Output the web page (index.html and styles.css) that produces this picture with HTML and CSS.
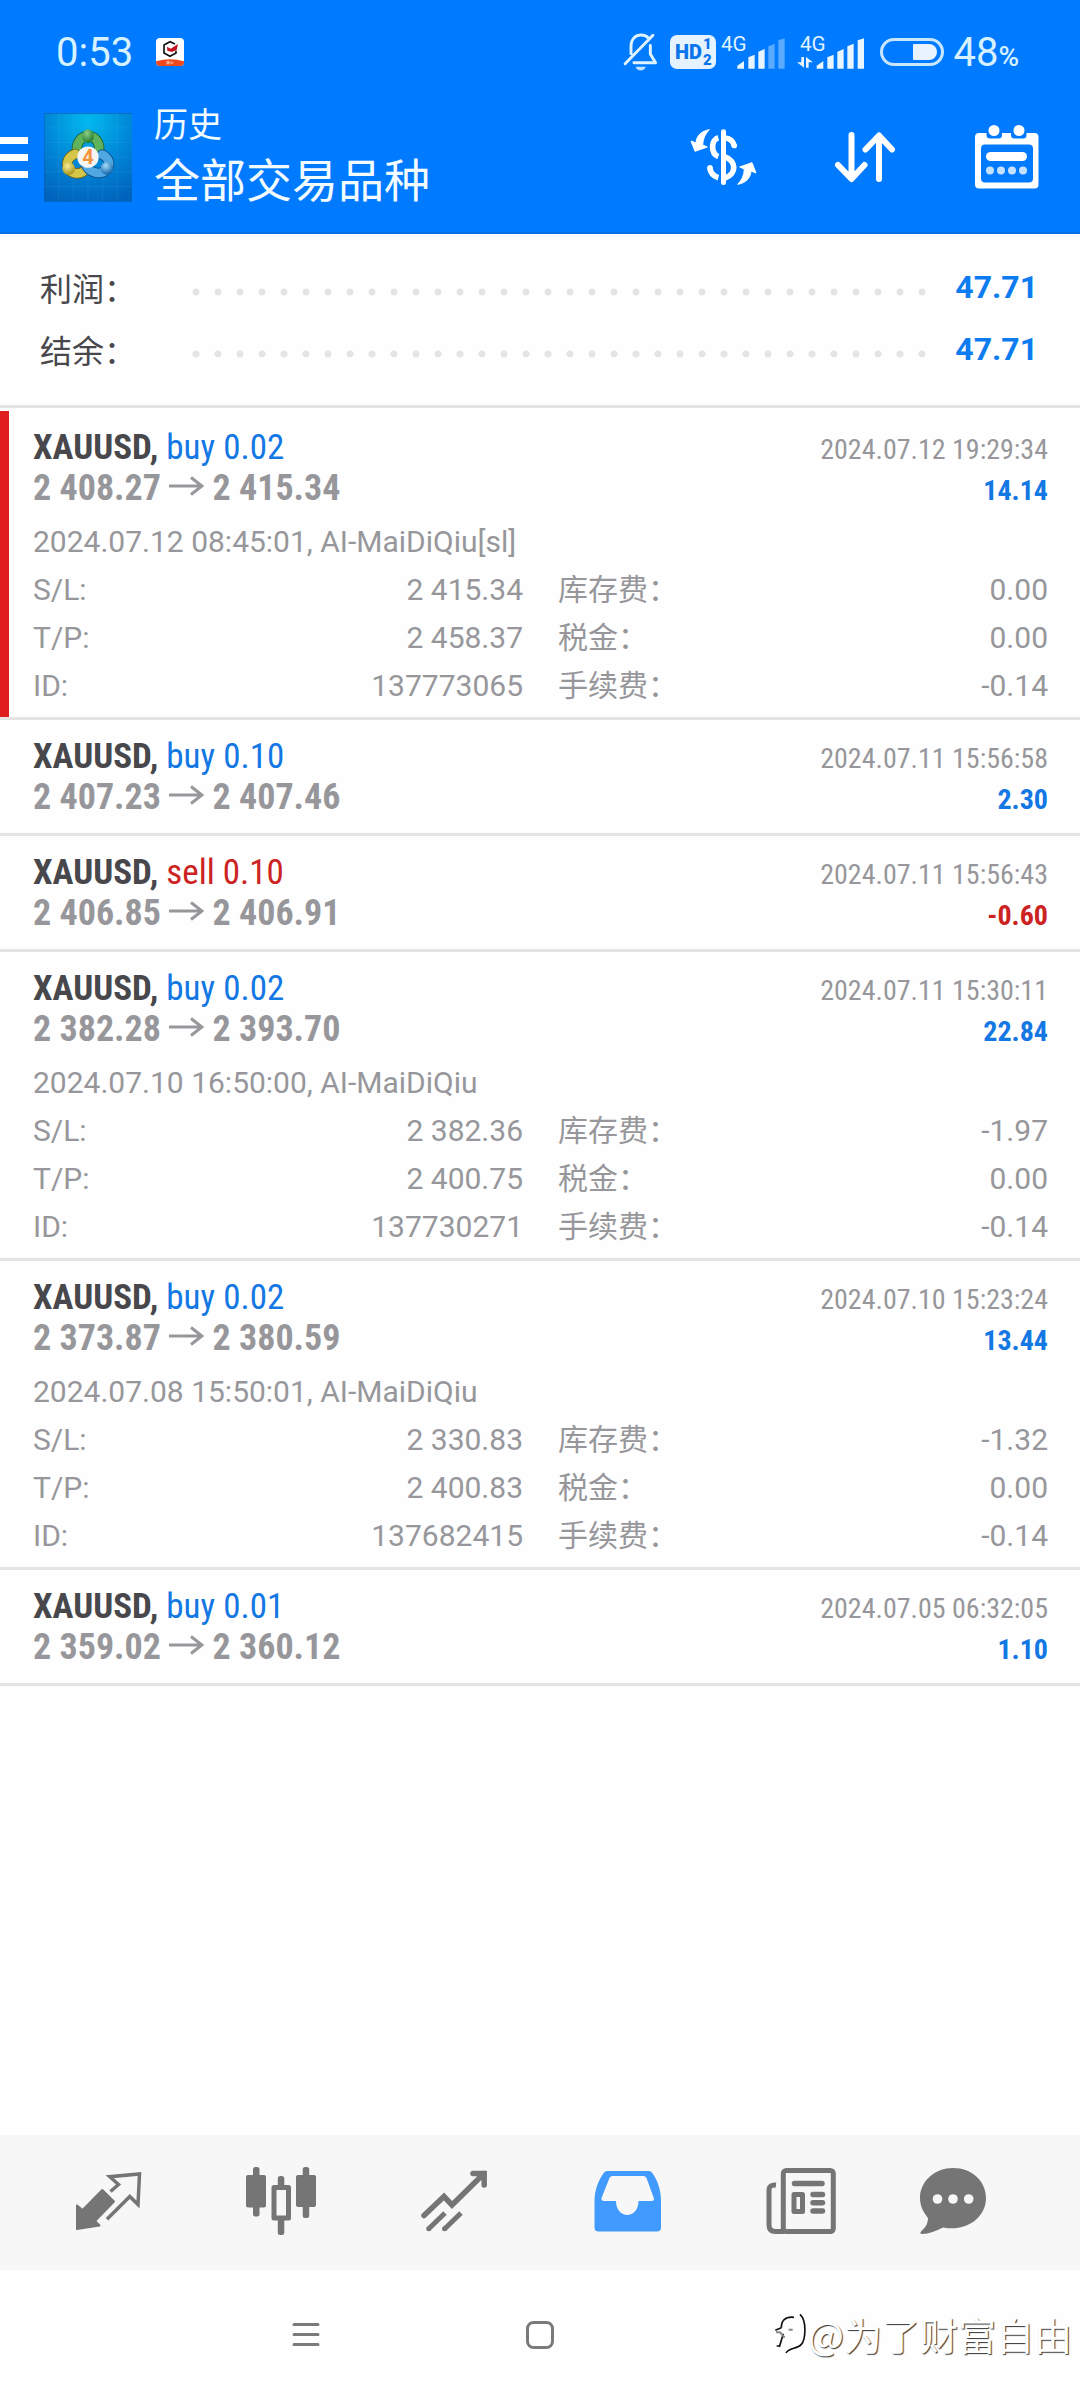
FILE: index.html
```html
<!DOCTYPE html>
<html lang="zh-CN">
<head>
<meta charset="utf-8">
<meta name="viewport" content="width=device-width, initial-scale=1">
<title>历史</title>
<link rel="stylesheet" href="styles.css">
</head>
<body>
<header class="header">
  <div class="status">
    <span class="clock">0:53</span>
    <svg class="notice" width="28" height="28" viewBox="0 0 84 84" aria-hidden="true">
      <defs><clipPath id="tile"><rect width="84" height="84" rx="12"/></clipPath></defs>
      <g clip-path="url(#tile)">
        <rect width="84" height="84" fill="#fff"/>
        <path d="M0 70Q42 58 84 70V84H0Z" fill="#f0481c"/>
        <path d="M57 18 42 11 24 21V45L42 55 60 45V38" fill="none" stroke="#111" stroke-width="5"/>
        <path d="M33 26 44 32 66 18 62 36 48 42 34 38Z" fill="#c41224"/>
        <text x="42" y="79" font-size="11" text-anchor="middle" fill="#fff" class="notice-text">骑士</text>
      </g>
    </svg>
    <div class="status-icons">
      <svg width="35" height="38" viewBox="35 40 106 116" aria-hidden="true">
        <g fill="none" stroke="#dff2ff" stroke-width="9" stroke-linecap="round" stroke-linejoin="round">
          <path d="M41 134 126 47M59 103V82C59 57 74 46 90 46 99 46 106 49 111 54M118 78V104L134 131H68"/>
        </g>
        <path d="M73 143H104C101 158 76 158 73 143Z" fill="#bfe2ff"/>
      </svg>
      <span class="hd"><b>HD</b><span class="hd-num"><b>1</b><b>2</b></span></span>
      <svg class="signal-one" width="64" height="44" viewBox="330 27 192 132" aria-label="4G">
        <text x="330" y="91" font-size="62" fill="#dff2ff" class="net">4G</text>
        <g fill="#e8f5ff"><path d="M379 134 399 120V143H379ZM412 109 431 101V143H412ZM442 92 461 84V143H442Z"/></g>
        <g fill="#5aabff"><path d="M472 76 491 68V143H472ZM502 58 521 52V143H502Z"/></g>
      </svg>
      <svg class="signal-two" width="67" height="44" viewBox="558 27 201 132" aria-label="4G">
        <text x="567" y="91" font-size="62" fill="#dff2ff" class="net">4G</text>
        <g fill="#e8f5ff"><path d="M617 134 637 120V143H617ZM649 109 668 101V143H649ZM679 92 698 84V143H679ZM709 76 728 68V143H709ZM740 58 759 52V143H740Z"/>
        <path d="M571 108H579V140L558 124H571ZM585 140V108L606 124H593V140Z"/></g>
      </svg>
      <svg class="battery" width="64" height="28" viewBox="0 0 64 28" aria-hidden="true">
        <rect x="1.5" y="1.5" width="61" height="25" rx="12.5" fill="none" stroke="#c9e7ff" stroke-width="3"/>
        <path d="M34 6H49A8 8 0 0 1 49 22H34Q33 22 33 21V7Q33 6 34 6Z" fill="#e8f3ff"/>
      </svg>
      <span class="percent">48<small>%</small></span>
    </div>
  </div>
  <div class="appbar">
    <button class="menu" aria-label="菜单"><i></i><i></i><i></i></button>
    <svg class="logo" width="88" height="89" viewBox="24 248 264 266" aria-hidden="true">
      <defs>
        <radialGradient id="sky" cx=".5" cy=".1" r=".95"><stop offset="0" stop-color="#00b9ee"/><stop offset=".55" stop-color="#0083d6"/><stop offset="1" stop-color="#0063bb"/></radialGradient>
        <radialGradient id="gr" cx=".4" cy=".3" r=".7"><stop offset="0" stop-color="#8fd088"/><stop offset="1" stop-color="#1d7a2c"/></radialGradient>
        <radialGradient id="ye" cx=".4" cy=".3" r=".7"><stop offset="0" stop-color="#f6ee9a"/><stop offset="1" stop-color="#a8951a"/></radialGradient>
        <radialGradient id="bl" cx=".4" cy=".3" r=".7"><stop offset="0" stop-color="#a5dcfa"/><stop offset="1" stop-color="#1265ae"/></radialGradient>
      </defs>
      <rect x="24" y="248" width="264" height="266" fill="url(#sky)"/>
      <path d="M68 248V514M112 248V514M156 248V514M200 248V514M244 248V514M24 292H288M24 336H288M24 380H288M24 424H288M24 468H288" stroke="#5cc4f2" stroke-opacity=".2" stroke-width="2"/>
      <path d="M24 249H288M25 248V514" stroke="#0a5fae" stroke-width="2"/>
      <g fill="none" stroke-linecap="round">
        <path d="M124 366C118 342 132 318 156 317 182 318 194 342 188 366" stroke="#1f5f2a" stroke-width="31"/>
        <path d="M124 366C118 342 132 318 156 317 182 318 194 342 188 366" stroke="#5fb35c" stroke-width="26"/>
        <path d="M118 370C96 378 88 398 98 416 108 430 130 434 146 420" stroke="#6d6316" stroke-width="31"/>
        <path d="M118 370C96 378 88 398 98 416 108 430 130 434 146 420" stroke="#d3c648" stroke-width="26"/>
        <path d="M198 372C220 382 224 402 214 416 198 434 166 430 152 408" stroke="#0f4d88" stroke-width="31"/>
        <path d="M198 372C220 382 224 402 214 416 198 434 166 430 152 408" stroke="#4fa8e2" stroke-width="26"/>
      </g>
      <ellipse cx="156" cy="317" rx="17" ry="21" fill="url(#gr)"/>
      <circle cx="98" cy="414" r="19" fill="url(#ye)"/>
      <circle cx="213" cy="413" r="19" fill="url(#bl)"/>
      <circle cx="156" cy="380" r="32" fill="#f7f5f4"/>
      <text x="156" y="401" font-size="60" text-anchor="middle" fill="#f3933c" class="logo-num">4</text>
    </svg>
    <div class="titles">
      <span class="section">历史</span>
      <h1>全部交易品种</h1>
    </div>
    <div class="actions">
      <button aria-label="货币">
        <svg width="67" height="56" viewBox="25 56 201 168" aria-hidden="true">
          <rect x="118" y="57" width="15" height="167" rx="7" fill="#fff"/>
          <g fill="none" stroke="#fff" stroke-width="17">
            <path d="M110 82C87 88 87 130 110 139M84 170C86 188 96 198 110 202"/>
            <path d="M130 83C146 84 155 92 158 108M130 140C164 150 166 192 130 203"/>
          </g>
          <circle cx="158" cy="106" r="8" fill="#fff"/><circle cx="85" cy="172" r="8" fill="#fff"/>
          <g fill="#fff" stroke="#fff" stroke-width="3" stroke-linejoin="round"><path d="M83 58C60 62 44 76 43 98L28 92 40 123 77 110 63 104C64 84 71 70 83 58Z"/><path transform="rotate(180 125.5 140)" d="M83 58C60 62 44 76 43 98L28 92 40 123 77 110 63 104C64 84 71 70 83 58Z"/></g>
        </svg>
      </button>
      <button aria-label="排序">
        <svg width="62" height="52" viewBox="834 131 62 52" aria-hidden="true">
          <path d="M851.500 135V178M838 165 851.500 179 864.500 165M879 179V136M865.500 149.500 879 135.500 892 149.500" fill="none" stroke="#fff" stroke-width="6" stroke-linecap="round" stroke-linejoin="round"/>
        </svg>
      </button>
      <button aria-label="日期">
        <svg width="66" height="66" viewBox="974 123 66 66" aria-hidden="true">
          <path fill="#fff" fill-rule="evenodd" d="M979 132H986.500V134Q986.500 137.500 990 137.500H998.500Q1002 137.500 1002 134V132H1011V134Q1011 137.500 1014.500 137.500H1023Q1026.500 137.500 1026.500 134V132H1034.500Q1038.500 132 1038.500 136V183.500Q1038.500 187.500 1034.500 187.500H979Q975 187.500 975 183.500V136Q975 132 979 132ZM985 143.500Q981 143.500 981 147.500V177.500Q981 181.500 985 181.500H1029Q1033 181.500 1033 177.500V147.500Q1033 143.500 1029 143.500Z"/>
          <circle cx="994" cy="129.500" r="5.500" fill="#fff"/><circle cx="1019" cy="129.500" r="5.500" fill="#fff"/>
          <rect x="986" y="151" width="41" height="9" rx="4.500" fill="#fff"/>
          <g fill="#c4e2ff"><circle cx="990" cy="169.500" r="4"/><circle cx="1001" cy="169.500" r="4"/><circle cx="1012" cy="169.500" r="4"/><circle cx="1023" cy="169.500" r="4"/></g>
        </svg>
      </button>
    </div>
  </div>
</header>

<main class="main">
  <dl class="summary">
    <div class="sum-row"><dt>利润：</dt><dd><i class="dots"></i><b>47.71</b></dd></div>
    <div class="sum-row"><dt>结余：</dt><dd><i class="dots"></i><b>47.71</b></dd></div>
  </dl>
  <ul class="deals">
    <li class="deal open stopped">
      <div class="line"><span class="name"><b>XAUUSD,</b> <span class="buy">buy 0.02</span></span><time>2024.07.12 19:29:34</time></div>
      <div class="line"><span class="price">2 408.27 <svg class="arrow" width="35" height="20" viewBox="0 0 35 20" aria-label="→"><path d="M0 10H33M22 1.500 33 10 22 18.500"/></svg> 2 415.34</span><b class="profit buy">14.14</b></div>
      <p class="comment">2024.07.12 08:45:01, AI-MaiDiQiu[sl]</p>
      <dl class="details">
        <div><dt>S/L:</dt><dd>2 415.34</dd></div><div><dt>库存费：</dt><dd>0.00</dd></div>
        <div><dt>T/P:</dt><dd>2 458.37</dd></div><div><dt>税金：</dt><dd>0.00</dd></div>
        <div><dt>ID:</dt><dd>137773065</dd></div><div><dt>手续费：</dt><dd>-0.14</dd></div>
      </dl>
    </li>
    <li class="deal">
      <div class="line"><span class="name"><b>XAUUSD,</b> <span class="buy">buy 0.10</span></span><time>2024.07.11 15:56:58</time></div>
      <div class="line"><span class="price">2 407.23 <svg class="arrow" width="35" height="20" viewBox="0 0 35 20" aria-label="→"><path d="M0 10H33M22 1.500 33 10 22 18.500"/></svg> 2 407.46</span><b class="profit buy">2.30</b></div>
    </li>
    <li class="deal">
      <div class="line"><span class="name"><b>XAUUSD,</b> <span class="sell">sell 0.10</span></span><time>2024.07.11 15:56:43</time></div>
      <div class="line"><span class="price">2 406.85 <svg class="arrow" width="35" height="20" viewBox="0 0 35 20" aria-label="→"><path d="M0 10H33M22 1.500 33 10 22 18.500"/></svg> 2 406.91</span><b class="profit sell">-0.60</b></div>
    </li>
    <li class="deal open">
      <div class="line"><span class="name"><b>XAUUSD,</b> <span class="buy">buy 0.02</span></span><time>2024.07.11 15:30:11</time></div>
      <div class="line"><span class="price">2 382.28 <svg class="arrow" width="35" height="20" viewBox="0 0 35 20" aria-label="→"><path d="M0 10H33M22 1.500 33 10 22 18.500"/></svg> 2 393.70</span><b class="profit buy">22.84</b></div>
      <p class="comment">2024.07.10 16:50:00, AI-MaiDiQiu</p>
      <dl class="details">
        <div><dt>S/L:</dt><dd>2 382.36</dd></div><div><dt>库存费：</dt><dd>-1.97</dd></div>
        <div><dt>T/P:</dt><dd>2 400.75</dd></div><div><dt>税金：</dt><dd>0.00</dd></div>
        <div><dt>ID:</dt><dd>137730271</dd></div><div><dt>手续费：</dt><dd>-0.14</dd></div>
      </dl>
    </li>
    <li class="deal open">
      <div class="line"><span class="name"><b>XAUUSD,</b> <span class="buy">buy 0.02</span></span><time>2024.07.10 15:23:24</time></div>
      <div class="line"><span class="price">2 373.87 <svg class="arrow" width="35" height="20" viewBox="0 0 35 20" aria-label="→"><path d="M0 10H33M22 1.500 33 10 22 18.500"/></svg> 2 380.59</span><b class="profit buy">13.44</b></div>
      <p class="comment">2024.07.08 15:50:01, AI-MaiDiQiu</p>
      <dl class="details">
        <div><dt>S/L:</dt><dd>2 330.83</dd></div><div><dt>库存费：</dt><dd>-1.32</dd></div>
        <div><dt>T/P:</dt><dd>2 400.83</dd></div><div><dt>税金：</dt><dd>0.00</dd></div>
        <div><dt>ID:</dt><dd>137682415</dd></div><div><dt>手续费：</dt><dd>-0.14</dd></div>
      </dl>
    </li>
    <li class="deal">
      <div class="line"><span class="name"><b>XAUUSD,</b> <span class="buy">buy 0.01</span></span><time>2024.07.05 06:32:05</time></div>
      <div class="line"><span class="price">2 359.02 <svg class="arrow" width="35" height="20" viewBox="0 0 35 20" aria-label="→"><path d="M0 10H33M22 1.500 33 10 22 18.500"/></svg> 2 360.12</span><b class="profit buy">1.10</b></div>
    </li>
  </ul>
</main>

<nav class="tabs">
  <a href="#quotes" aria-label="行情"><svg width="67" height="60" viewBox="75 52 67 60">
    <path fill="currentColor" stroke="currentColor" stroke-width="2" stroke-linejoin="round" d="M77 86.500 82.600 91 102.300 71 114 82.500 95 102 99.500 106.500 77 110Z"/>
    <path fill="none" stroke="currentColor" stroke-width="3.500" d="M110.500 72.500 118.500 65.500 109.800 57.700 139.500 55 138 85.500 129.800 77.500 107 100.300"/></svg></a>
  <a href="#charts" aria-label="图表"><svg width="71" height="70" viewBox="246 47 71 70">
    <g fill="currentColor"><rect x="246" y="56" width="20" height="32.500" rx="2"/><rect x="253" y="48" width="6.500" height="49.500" rx="2.500"/><rect x="296" y="56" width="20" height="32" rx="2"/><rect x="302.700" y="48" width="6.500" height="51" rx="2.500"/><rect x="277.800" y="57" width="6.500" height="12" rx="2.500"/><rect x="277.800" y="98" width="6.500" height="18" rx="2.500"/></g>
    <rect x="274" y="68.500" width="14.500" height="30.500" fill="none" stroke="currentColor" stroke-width="5" stroke-linejoin="round"/></svg></a>
  <a href="#trade" aria-label="交易"><svg width="67" height="62" viewBox="421 50 67 62">
    <path fill="none" stroke="currentColor" stroke-width="5.500" stroke-linecap="round" d="M424 95.500 444 76.500 452 85 484 53.500M473 53.500H484.200V65"/>
    <path fill="none" stroke="currentColor" stroke-width="5" d="M428.500 109 445 93M444.500 109 461 93"/><circle cx="428.700" cy="108.700" r="2.500" fill="currentColor"/><circle cx="444.500" cy="108.700" r="2.500" fill="currentColor"/></svg></a>
  <a href="#history" class="active" aria-current="page" aria-label="历史"><svg width="67" height="61" viewBox="54 51 67 61">
    <path fill="currentColor" fill-rule="evenodd" d="M67 51H109Q111 51 112 52.500C118 61 121 70 121 82V107.500Q121 111.500 117 111.500H58.500Q54.500 111.500 54.500 107.500V82C54.500 70 58 61 64 52.500Q65 51 67 51ZM72.500 56Q70.500 56 69.500 58L61.500 78Q61 81 64 81H76C76 99.500 98.500 99.500 98.500 81H111.500Q114.500 81 113.800 78L106.500 58Q105.500 56 103.500 56Z"/></svg></a>
  <a href="#news" aria-label="新闻"><svg width="70" height="66" viewBox="226 48 70 66">
    <g fill="none" stroke="currentColor"><rect x="243.300" y="50.500" width="50" height="61" rx="3" stroke-width="5"/><path stroke-width="5" d="M236 65Q229 64.500 229 70V105Q229 111.500 235.500 111.500H244"/>
    <path stroke-width="5.500" stroke-linecap="round" d="M254.500 63.500H282M273 74.500H282.500M273 82.700H282.500M273 91H282.500"/><rect x="254" y="74.500" width="8.500" height="17" stroke-width="5" stroke-linejoin="round"/></g></svg></a>
  <a href="#chat" aria-label="消息"><svg width="67" height="66" viewBox="380 48 67 66">
    <path fill="currentColor" d="M388 98C385 94 380 88 380 78 380 61 395 48 413 48 432 48 446 61 446 78 446 98 426 112 403 107.500 396 111 389 114 382 114 380 114 380 112 381.500 111 386 107 388 103 388 98Z"/>
    <g fill="#f7f7f7"><circle cx="397.500" cy="79" r="4.800"/><circle cx="413" cy="79" r="4.800"/><circle cx="428.700" cy="79" r="4.800"/></g></svg></a>
</nav>

<footer class="system">
  <div class="keys">
    <button aria-label="最近任务"><svg width="28" height="28" viewBox="0 0 28 28"><path d="M2 3.500H26M2 13.500H26M2 23.500H26"/></svg></button>
    <button aria-label="主屏幕"><svg width="28" height="28" viewBox="0 0 28 28"><rect x="1.500" y="1.500" width="25" height="25" rx="6"/></svg></button>
  </div>
  <div class="mark">
    <svg width="34" height="46" viewBox="40 62 102 138" aria-hidden="true">
      <g fill="none" stroke-width="5"><path stroke="#111" d="M100 81C72 78 62 92 62 112M118 72C140 92 134 150 122 162 110 176 84 172 76 188M44 120 62 112M68 130 56 170M48 167H57"/><path stroke="#888" stroke-width="6" d="M46 126H58L72 142M84 118H96"/></g>
    </svg>
    <span>@为了财富自由</span>
  </div>
</footer>
</body>
</html>
```
FILE: styles.css
```css
* {
  box-sizing: border-box;
}

body {
  margin: 0;
  min-height: 100vh;
  display: flex;
  flex-direction: column;
  background: #fefefe;
  color: #97979b;
  font-family: Roboto, "Noto Sans CJK SC", sans-serif;
}

svg {
  display: block;
  flex: none;
}

button {
  padding: 0;
  border: 0;
  background: none;
  cursor: pointer;
}

h1, p, ul, dl, dd {
  margin: 0;
  padding: 0;
}

/* Header */
.header {
  padding-bottom: 20px;
  border-bottom: 2px solid #0a6ee6;
  background: #007aff;
  color: #f2fbff;
}

.status {
  display: flex;
  align-items: center;
  height: 102px;
  padding: 2px 61px 0 56px;
  color: #d6f1ff;
}

.clock {
  font-size: 40px;
}

.notice {
  margin-left: 23px;
}

.notice-text {
  font-family: "Noto Sans CJK SC", sans-serif;
}

.status-icons {
  display: flex;
  align-items: center;
  margin-left: auto;
}

.hd {
  display: flex;
  align-items: center;
  justify-content: center;
  gap: 1px;
  width: 46px;
  height: 34px;
  margin: 0 5px 0 12px;
  border-radius: 7px;
  background: #e4f3ff;
  color: #0a74ea;
  font-family: Roboto, sans-serif;
  font-size: 20px;
}

.hd b {
  font-weight: 900;
}

.hd-num {
  display: flex;
  flex-direction: column;
  font-size: 15px;
  line-height: 16px;
}

.net {
  font-family: Roboto, sans-serif;
}

.signal-two {
  margin-left: 12px;
}

.battery {
  margin: 0 9px 0 16px;
}

.percent {
  font-size: 40px;
}

.percent small {
  font-size: 28px;
  font-weight: 500;
}

.appbar {
  display: flex;
  align-items: center;
  height: 110px;
  padding-right: 2px;
}

.menu {
  display: flex;
  flex-direction: column;
  gap: 10px;
  width: 28px;
}

.menu i {
  height: 7px;
  background: #fff;
}

.logo {
  margin: 0 22px 0 16px;
}

.logo-num {
  font-family: Roboto, sans-serif;
  font-weight: 700;
}

.titles {
  flex: 1;
  padding-top: 2px;
  white-space: nowrap;
}

.section {
  display: block;
  font-size: 34px;
  line-height: 45px;
}

h1 {
  font-size: 46px;
  font-weight: 400;
  line-height: 66px;
}

.actions {
  display: flex;
}

.actions button {
  display: grid;
  place-items: center;
  width: 142px;
  height: 110px;
}

/* Totals */
.main {
  flex: 1;
}

.summary {
  padding: 22px 42px 25px 40px;
  border-bottom: 3px solid #e4e4e4;
  color: #47474c;
  font-size: 32px;
}

.sum-row {
  display: flex;
  align-items: center;
  height: 62px;
}

.sum-row dt {
  width: 145px;
}

.sum-row dd {
  flex: 1;
  display: flex;
  align-items: center;
}

.dots {
  flex: 1;
  height: 18px;
  margin-right: 22px;
  background: radial-gradient(circle at 11px 14px, #e4e4e4 3px, transparent 4px) 0 0 / 22px 18px round;
}

.sum-row b {
  color: #0d7cf0;
  font-size: 32px;
}

/* Deals */
.deals {
  padding-top: 3px;
  list-style: none;
}

.deal {
  padding: 16px 32px 15px 33px;
  border-bottom: 3px solid #e4e4e4;
}

.deal.open {
  padding-bottom: 7px;
}

.deal.stopped {
  background: linear-gradient(#e01e1e, #e01e1e) 0 0 / 9px 100% no-repeat padding-box;
}

.line {
  display: flex;
  align-items: baseline;
  justify-content: space-between;
  height: 41px;
  font-family: "Roboto Condensed", Roboto, sans-serif;
  font-size: 35px;
  line-height: 41px;
}

.name b {
  color: #47474c;
}

.price {
  font-size: 36px;
  font-weight: 700;
}

.arrow {
  display: inline-block;
  vertical-align: 4px;
  fill: none;
  stroke: #97979b;
  stroke-width: 3;
}

.line time,
.profit {
  font-size: 28px;
}

.buy {
  color: #1377e4;
}

.sell {
  color: #cc2222;
}

.comment,
.details {
  font-size: 30px;
  line-height: 48px;
}

.comment {
  margin-top: 9px;
}

.details {
  display: grid;
  grid-template-columns: 1fr 1fr;
  column-gap: 35px;
}

.details div {
  display: flex;
  justify-content: space-between;
  height: 48px;
}

.details dt {
  white-space: nowrap;
}

/* Bottom tabs */
.tabs {
  display: grid;
  grid-template-columns: repeat(5, 173fr) 132fr;
  height: 135px;
  padding: 0 61px 0 22px;
  background: #f7f7f7;
}

.tabs a {
  display: grid;
  place-items: center;
  padding-bottom: 3px;
  color: #757575;
}

.tabs .active {
  color: #419bff;
}

/* System navigation */
.system {
  position: relative;
  height: 130px;
}

.keys {
  display: grid;
  grid-template-columns: repeat(3, 1fr);
  width: 65%;
  height: 130px;
  margin: 0 auto;
}

.keys button {
  display: grid;
  place-items: center;
}

.keys svg {
  fill: none;
  stroke: #7a7a7a;
  stroke-width: 3;
  stroke-linecap: round;
}

.mark {
  position: absolute;
  right: 8px;
  bottom: 40px;
  display: flex;
  align-items: center;
  color: #fff;
  font-family: "Noto Sans CJK SC", sans-serif;
  font-size: 38px;
  line-height: 52px;
  text-shadow: 1px 1px 1px #333;
}
```
